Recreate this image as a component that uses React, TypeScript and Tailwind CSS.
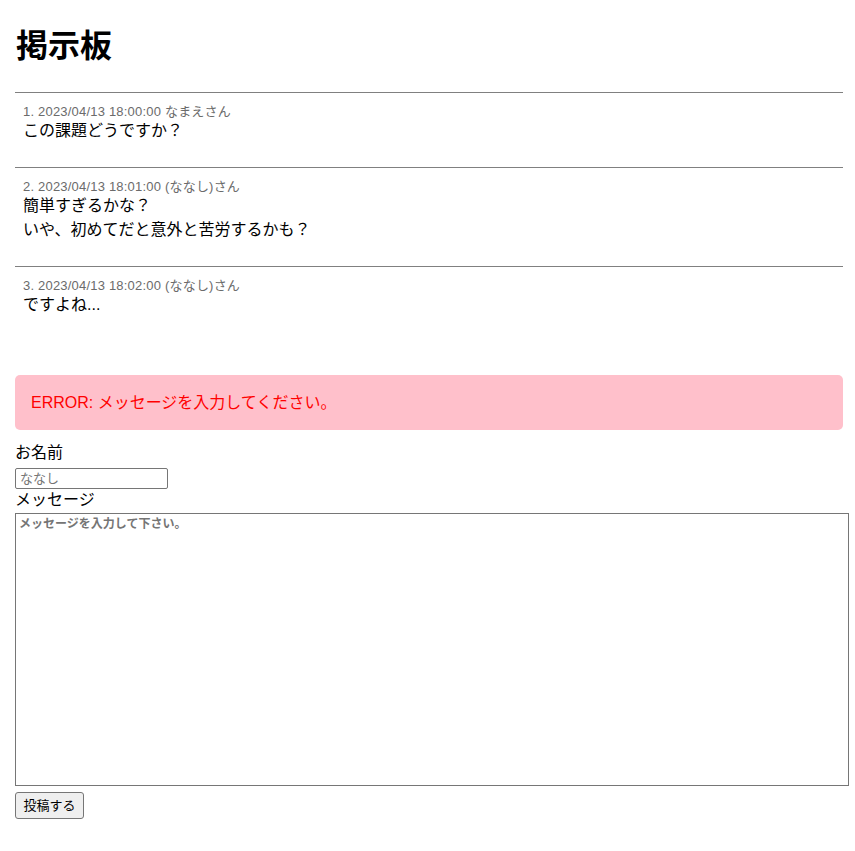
import React, { useState } from 'react';

interface Post {
    id: number;
    date: string;
    name: string;
    body: string[];
}

const posts: Post[] = [
    { id: 1, date: '2023/04/13 18:00:00', name: 'なまえ', body: ['この課題どうですか？'] },
    { id: 2, date: '2023/04/13 18:01:00', name: '(ななし)', body: ['簡単すぎるかな？', 'いや、初めてだと意外と苦労するかも？'] },
    { id: 3, date: '2023/04/13 18:02:00', name: '(ななし)', body: ['ですよね...'] },
];

const font = "font-['Liberation_Sans','Noto_Sans_CJK_JP',sans-serif]";

export default function App() {
    const [name, setName] = useState('');
    const [message, setMessage] = useState('');

    return (
        <div className={`${font} w-[855px] min-h-[851px] bg-white text-black pl-[15px] pr-[12px]`}>
            <h1 className="pt-[22px] text-[32px] leading-[48px] font-bold pl-[1px]">掲示板</h1>

            {/* Post list */}
            <div className="mt-[22px]">
                {posts.map((post) => (
                    <div key={post.id} className="border-t border-[#808080] pt-[8px] pb-[8px] mb-[16px] px-[8px]">
                        <div className="h-[18px] pt-[2px] text-[13px] tracking-[0.2px] leading-[18px] text-[#6b6b6b]">
                            {post.id}. {post.date} {post.name}さん
                        </div>
                        {post.body.map((line, i) => (
                            <div key={i} className="h-[24px] text-[16px] leading-[24px]">{line}</div>
                        ))}
                    </div>
                ))}
            </div>

            {/* Error */}
            <div className="mt-[50px] h-[55px] w-[828px] rounded-[5px] bg-[#ffc0cb] px-[16px] flex items-center text-[16px] text-[#ff0000]">
                ERROR: メッセージを入力してください。
            </div>

            {/* Form */}
            <div className="mt-[11px] text-[16px] leading-[24px]">お名前</div>
            <input
                value={name}
                onChange={(e) => setName(e.target.value)}
                placeholder="ななし"
                className="block mt-[3px] h-[21px] w-[153px] border border-[#767676] rounded-[2px] px-[4px] text-[13px] leading-[19px] placeholder:text-[#757575]"
            />
            <div className="text-[16px] leading-[24px] -mt-[1px]">メッセージ</div>
            <textarea
                value={message}
                onChange={(e) => setMessage(e.target.value)}
                placeholder="メッセージを入力して下さい。"
                className="block mt-[1px] h-[273px] w-[834px] border border-[#767676] px-[3px] py-[2px] text-[12px] leading-[16px] font-bold resize-none placeholder:text-[#757575]"
            />
            <button className="block mt-[6px] h-[27px] w-[69px] border border-[#767676] rounded-[3px] bg-[#efefef] text-[13px] text-black">
                投稿する
            </button>
        </div>
    );
}
